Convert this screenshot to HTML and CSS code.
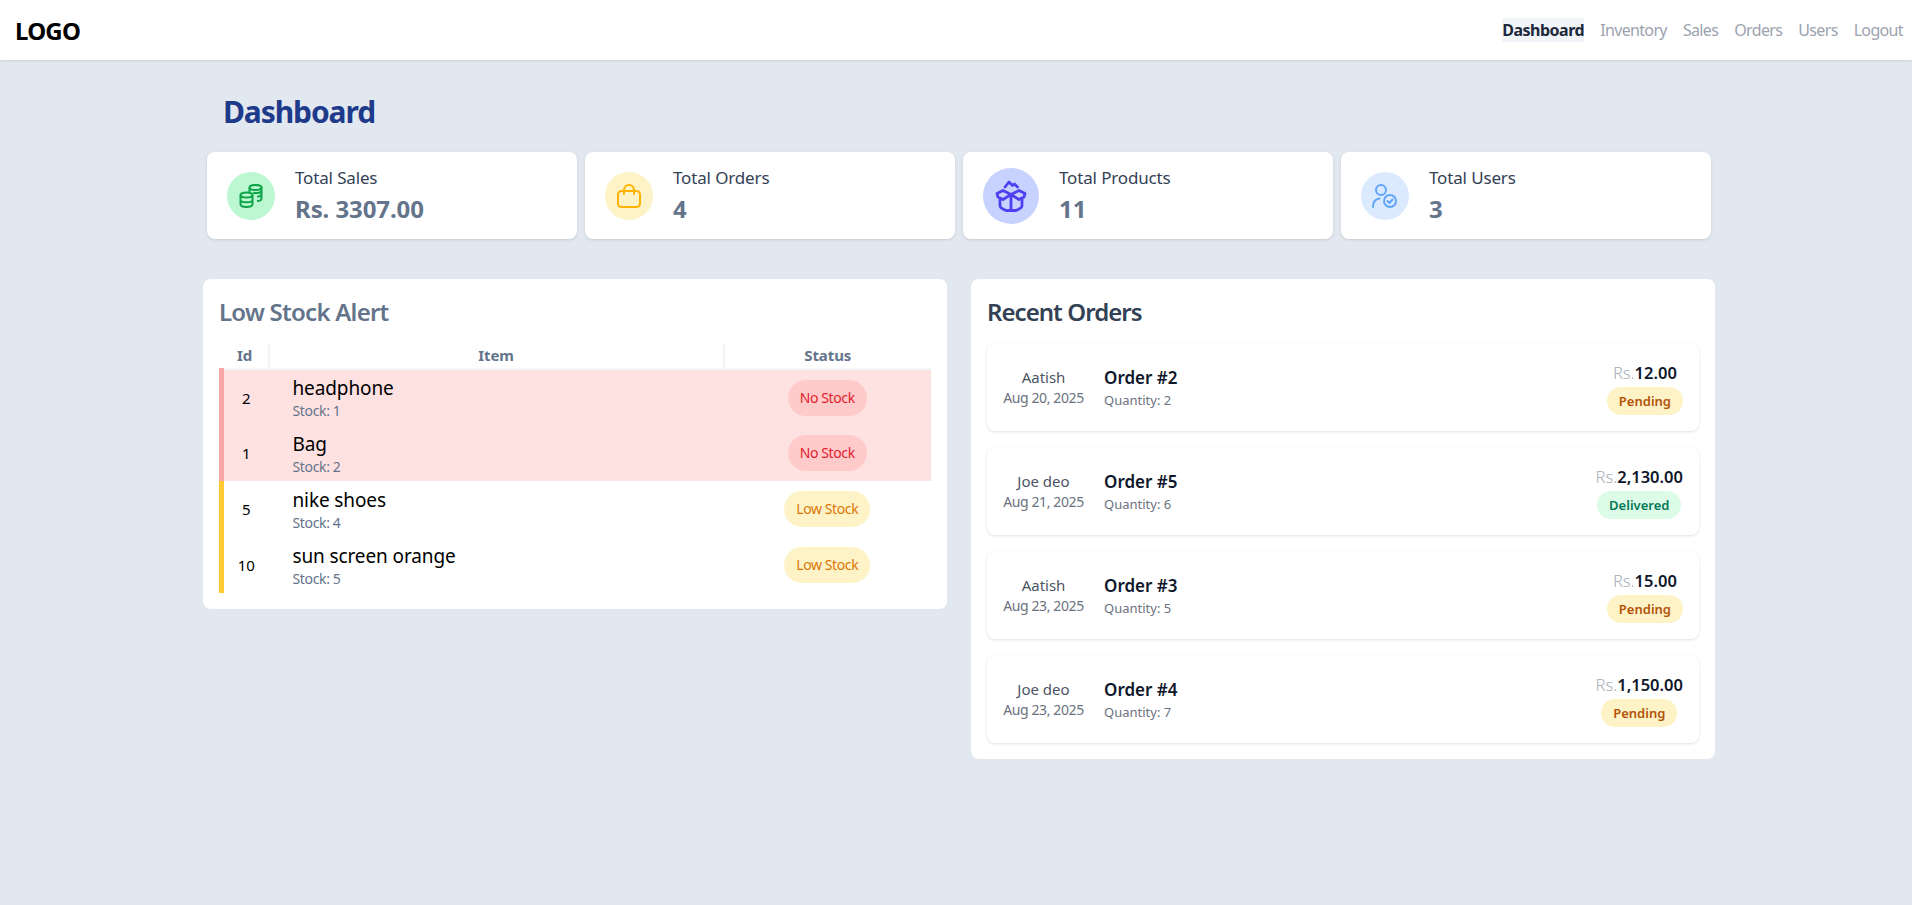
FILE: index.html
```html
<!DOCTYPE html>
<html lang="en">
  <head>
    <meta charset="UTF-8" />
    <title>Dashboard</title>
    <link rel="stylesheet" href="styles.css">
  </head>
  <body>
    <header class="topbar">
      <div class="logo">LOGO</div>
      <nav class="nav">
        <a href="#" class="nav-link active">Dashboard</a>
        <a href="#" class="nav-link">Inventory</a>
        <a href="#" class="nav-link">Sales</a>
        <a href="#" class="nav-link">Orders</a>
        <a href="#" class="nav-link">Users</a>
        <a href="#" class="nav-link">Logout</a>
      </nav>
    </header>

    <main class="content">
      <h1 class="page-title">Dashboard</h1>

      <section class="stats">
        <div class="stat-card">
          <div class="stat-icon icon-green">
            <svg width="24" height="24" viewBox="0 0 24 24" fill="none" stroke="#0ea54a" stroke-width="2" stroke-linejoin="round">
              <ellipse cx="16.5" cy="3.5" rx="6" ry="2.6" />
              <path d="M10.5 3.5V9M22.5 3.5V14.5C22.5 16 20.5 17 18 17.1M14 8.7C15.5 9 20.5 9.3 22.5 7.5M18.2 12.8C19.8 12.6 21.5 12 22.5 11" />
              <ellipse cx="7.5" cy="11" rx="6" ry="2.6" />
              <path d="M1.5 11V20.3C1.5 21.8 4.2 22.9 7.5 22.9S13.5 21.8 13.5 20.3V11M1.5 15.7C1.5 17.2 4.2 18.3 7.5 18.3S13.5 17.2 13.5 15.7" />
            </svg>
          </div>
          <div>
            <p class="stat-label">Total Sales</p>
            <p class="stat-value">Rs. 3307.00</p>
          </div>
        </div>
        <div class="stat-card">
          <div class="stat-icon icon-yellow">
            <svg width="24" height="24" viewBox="0 0 24 24" fill="none" stroke="#ffb300" stroke-width="2" stroke-linecap="round">
              <rect x="1" y="7" width="22" height="16" rx="3.5" />
              <path d="M7 10V6a5 5 0 0 1 10 0V10" />
            </svg>
          </div>
          <div>
            <p class="stat-label">Total Orders</p>
            <p class="stat-value">4</p>
          </div>
        </div>
        <div class="stat-card">
          <div class="stat-icon stat-icon-lg icon-indigo">
            <svg width="32" height="32" viewBox="0 0 32 32" fill="none" stroke="#4f3ff0" stroke-width="2.8" stroke-linecap="round" stroke-linejoin="round">
              <path d="M16 14.5L8 10.5 2 13.5 3 17 8 19.5 16 14.5 24 19.5 29 17 30 13.5 24 10.5 16 14.5V30.5" />
              <path d="M5 18.5V25.5C5 27 6 28 7 28.5L11 30.5H21L25 28.5C26 28 27 27 27 25.5V18.5" />
              <path d="M10 7L14 2 17.5 5.5 19.5 4 22.5 7" />
            </svg>
          </div>
          <div>
            <p class="stat-label">Total Products</p>
            <p class="stat-value">11</p>
          </div>
        </div>
        <div class="stat-card">
          <div class="stat-icon icon-blue">
            <svg width="26" height="24" viewBox="0 0 26 24" fill="none" stroke="#60a5fa" stroke-width="2" stroke-linecap="round">
              <circle cx="9" cy="6" r="5" />
              <path d="M1 23C1 18 3.5 15 7.5 14.5" />
              <circle cx="18" cy="17" r="6" />
              <path d="M15.5 17L17.5 19 20.5 15.5" />
            </svg>
          </div>
          <div>
            <p class="stat-label">Total Users</p>
            <p class="stat-value">3</p>
          </div>
        </div>
      </section>

      <section class="panels">
        <div class="panel">
          <h2 class="panel-title muted">Low Stock Alert</h2>
          <table class="stock-table">
            <thead>
              <tr>
                <th class="col-id">Id</th>
                <th class="col-item">Item</th>
                <th class="col-status">Status</th>
              </tr>
            </thead>
            <tbody>
              <tr class="row-empty">
                <td class="cell-id">2</td>
                <td class="cell-item"><span class="item-name">headphone</span><span class="item-stock">Stock: 1</span></td>
                <td class="cell-status"><span class="stock-badge badge-red">No Stock</span></td>
              </tr>
              <tr class="row-empty">
                <td class="cell-id">1</td>
                <td class="cell-item"><span class="item-name">Bag</span><span class="item-stock">Stock: 2</span></td>
                <td class="cell-status"><span class="stock-badge badge-red">No Stock</span></td>
              </tr>
              <tr class="row-low">
                <td class="cell-id">5</td>
                <td class="cell-item"><span class="item-name">nike shoes</span><span class="item-stock">Stock: 4</span></td>
                <td class="cell-status"><span class="stock-badge badge-amber">Low Stock</span></td>
              </tr>
              <tr class="row-low">
                <td class="cell-id">10</td>
                <td class="cell-item"><span class="item-name">sun screen orange</span><span class="item-stock">Stock: 5</span></td>
                <td class="cell-status"><span class="stock-badge badge-amber">Low Stock</span></td>
              </tr>
            </tbody>
          </table>
        </div>

        <div class="panel">
          <h2 class="panel-title">Recent Orders</h2>
          <div class="orders">
            <div class="order">
              <div class="order-who"><span class="order-customer">Aatish</span><span class="order-date">Aug 20, 2025</span></div>
              <div class="order-info"><span class="order-name">Order #2</span><span class="order-qty">Quantity: 2</span></div>
              <div class="order-side"><span class="order-price"><span class="currency">Rs.</span>12.00</span><span class="order-badge pending">Pending</span></div>
            </div>
            <div class="order">
              <div class="order-who"><span class="order-customer">Joe deo</span><span class="order-date">Aug 21, 2025</span></div>
              <div class="order-info"><span class="order-name">Order #5</span><span class="order-qty">Quantity: 6</span></div>
              <div class="order-side"><span class="order-price"><span class="currency">Rs.</span>2,130.00</span><span class="order-badge delivered">Delivered</span></div>
            </div>
            <div class="order">
              <div class="order-who"><span class="order-customer">Aatish</span><span class="order-date">Aug 23, 2025</span></div>
              <div class="order-info"><span class="order-name">Order #3</span><span class="order-qty">Quantity: 5</span></div>
              <div class="order-side"><span class="order-price"><span class="currency">Rs.</span>15.00</span><span class="order-badge pending">Pending</span></div>
            </div>
            <div class="order">
              <div class="order-who"><span class="order-customer">Joe deo</span><span class="order-date">Aug 23, 2025</span></div>
              <div class="order-info"><span class="order-name">Order #4</span><span class="order-qty">Quantity: 7</span></div>
              <div class="order-side"><span class="order-price"><span class="currency">Rs.</span>1,150.00</span><span class="order-badge pending">Pending</span></div>
            </div>
          </div>
        </div>
      </section>
    </main>
  </body>
</html>
```

FILE: styles.css
```css
body {
  font-family: "Noto Sans", sans-serif;
  margin: 0;
  padding: 0;
  background-color: #e2e8f0;
  color: #000;
  height: 905px;
  overflow: hidden;
}

p, h1, h2 {
  margin: 0;
}

.topbar {
  height: 60px;
  box-sizing: border-box;
  background-color: #fff;
  box-shadow: 0 1px 3px rgba(0, 0, 0, 0.1);
  display: flex;
  justify-content: space-between;
  align-items: center;
  padding: 0 9px 0 15px;
}

.logo {
  font-size: 24px;
  font-weight: 700;
  letter-spacing: -0.8px;
}

.nav {
  display: flex;
  gap: 16px;
}

.nav-link {
  font-size: 16px;
  line-height: 24px;
  color: #9ca3af;
  text-decoration: none;
  letter-spacing: -0.65px;
}

.nav-link.active {
  background-color: #f1f5f9;
  color: #1e293b;
  font-weight: 700;
  letter-spacing: -0.5px;
}

.content {
  width: 1512px;
  margin-left: 203px;
  padding-top: 32px;
}

.page-title {
  font-size: 30px;
  line-height: 40px;
  font-weight: 700;
  color: #1e3a8a;
  margin-left: 20px;
  margin-bottom: 20px;
  letter-spacing: -1.1px;
}

.stats {
  display: grid;
  grid-template-columns: repeat(4, 370px);
  gap: 8px;
  margin: 0 4px 40px;
}

.stat-card {
  height: 87px;
  box-sizing: border-box;
  background-color: #fff;
  border-radius: 8px;
  box-shadow: 0 1px 3px rgba(0, 0, 0, 0.12);
  display: flex;
  align-items: center;
  gap: 20px;
  padding: 0 20px;
}

.stat-icon {
  width: 48px;
  height: 48px;
  border-radius: 50%;
  display: flex;
  align-items: center;
  justify-content: center;
  flex-shrink: 0;
}

.stat-icon-lg {
  width: 56px;
  height: 56px;
}

.icon-green { background-color: #bbf7d0; }
.icon-yellow { background-color: #fef3c7; }
.icon-indigo { background-color: #c7d2fe; }
.icon-blue { background-color: #dbeafe; }

.stat-label {
  font-size: 17px;
  line-height: 24px;
  color: #334155;
  letter-spacing: -0.15px;
}

.stat-value {
  font-size: 24px;
  line-height: 32px;
  margin-top: 3px;
  font-weight: 700;
  color: #64748b;
  letter-spacing: -0.1px;
}

.panels {
  display: grid;
  grid-template-columns: 744px 744px;
  gap: 24px;
  align-items: start;
}

.panel {
  background-color: #fff;
  border-radius: 8px;
  padding: 16px;
}

.panel-title {
  font-size: 24px;
  line-height: 34px;
  font-weight: 600;
  color: #334155;
  margin-bottom: 14px;
  letter-spacing: -0.95px;
}

.panel-title.muted {
  color: #64748b;
  letter-spacing: -0.75px;
}

/* low stock table */
.stock-table {
  width: 712px;
  border-collapse: collapse;
  table-layout: fixed;
}

.stock-table th {
  box-sizing: border-box;
  height: 26px;
  padding: 0 0 2px;
  font-size: 15px;
  line-height: 20px;
  font-weight: 700;
  color: #64748b;
  border-bottom: 2px solid #f1f5f9;
  letter-spacing: -0.1px;
}

.col-id { width: 47px; border-right: 2px solid #f1f5f9; }
.col-item { width: 455px; border-right: 2px solid #f1f5f9; }

.stock-table td {
  height: 56px;
  padding: 0;
  box-sizing: border-box;
}

.row-empty {
  background-color: #fee2e2;
  border-left: 5px solid #fca5a5;
}

.row-low {
  border-left: 5px solid #fdca33;
}

.cell-id {
  text-align: center;
  font-size: 15px;
}

.stock-table .cell-item {
  padding: 1px 0 0 24px;
}

.item-name {
  display: block;
  font-size: 19px;
  line-height: 26px;
  letter-spacing: -0.12px;
}

.item-stock {
  display: block;
  font-size: 14px;
  line-height: 20px;
  color: #64748b;
  letter-spacing: -0.35px;
}

.cell-status {
  text-align: center;
}

.stock-badge {
  display: inline-block;
  font-size: 14px;
  line-height: 20px;
  padding: 8px 12px;
  border-radius: 18px;
  letter-spacing: -0.4px;
}

.badge-red { background-color: #fecaca; color: #e11d2e; }
.badge-amber { background-color: #fef3c7; color: #d97706; }

/* recent orders */
.orders {
  display: flex;
  flex-direction: column;
  gap: 16px;
}

.order {
  height: 88px;
  box-sizing: border-box;
  padding: 2px 16px 0;
  background-color: #fff;
  border-radius: 8px;
  box-shadow: 0 1px 3px rgba(0, 0, 0, 0.12);
  display: flex;
  align-items: center;
}

.order-who {
  width: 81px;
  margin: -2px 20px 0 0;
  display: flex;
  flex-direction: column;
  align-items: center;
  white-space: nowrap;
}

.order-customer {
  font-size: 15px;
  line-height: 21px;
  color: #4b5563;
}

.order-date {
  font-size: 14px;
  line-height: 20px;
  color: #6b7280;
  letter-spacing: -0.4px;
}

.order-info {
  display: flex;
  flex-direction: column;
}

.order-name {
  font-size: 17px;
  line-height: 24px;
  font-weight: 600;
  color: #0f172a;
}

.order-qty {
  font-size: 13px;
  line-height: 20px;
  color: #6b7280;
}

.order-side {
  margin-left: auto;
  display: flex;
  flex-direction: column;
  align-items: center;
  gap: 2px;
}

.order-price {
  font-size: 16.5px;
  line-height: 24px;
  font-weight: 600;
  color: #0f172a;
}

.currency {
  font-weight: 300;
  color: #a8adb8;
}

.order-badge {
  font-size: 13px;
  line-height: 20px;
  font-weight: 600;
  padding: 4px 12px;
  border-radius: 14px;
}

.pending { background-color: #fef3c7; color: #b45309; }
.delivered { background-color: #dcfce7; color: #047857; }
```
